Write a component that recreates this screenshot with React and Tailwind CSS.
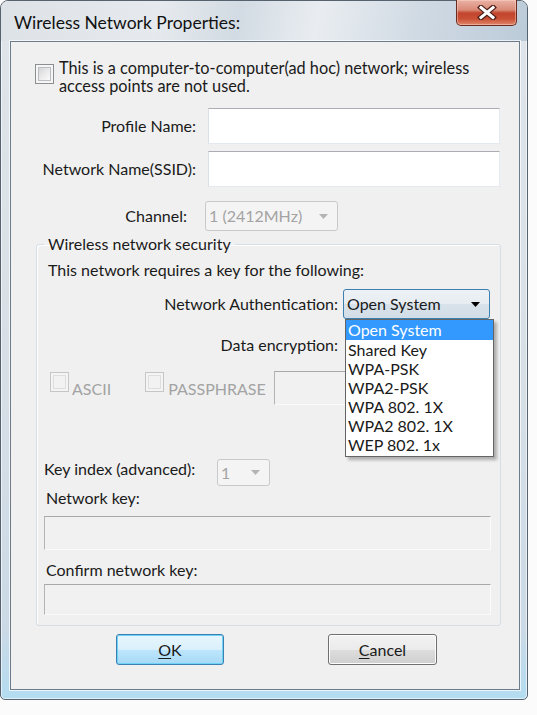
import React from "react";

function Checkbox({ disabled, className = "" }) {
  return (
    <span
      className={`block w-[19px] h-[20px] border p-[2px] ${
        disabled ? "border-[#c6c6c6] bg-[#f4f4f4]" : "border-[#8d8e8f] bg-[#f6f6f6]"
      } ${className}`}
    >
      <span
        className={`block w-full h-full border ${
          disabled
            ? "border-[#dedede] bg-[#f2f2f2]"
            : "border-[#b9bcc0] bg-[linear-gradient(135deg,#d6d6d6_0%,#ececec_55%,#fafafa_100%)]"
        }`}
      />
    </span>
  );
}

function Arrow({ color = "#000", w = 9, h = 5 }) {
  return (
    <svg width={w} height={h} viewBox="0 0 9 5">
      <polygon points="0,0 9,0 4.5,5" fill={color} />
    </svg>
  );
}

function TextInput({ className = "" }) {
  return (
    <div
      className={`bg-white border border-[#e3e9ef] border-t-[#abadb3] border-l-[#dbdfe6] ${className}`}
    />
  );
}

function DisabledInput({ className = "" }) {
  return (
    <div
      className={`bg-[#f1f1f1] border border-[#fafafa] border-t-[#a8a8a8] border-l-[#b4b4b4] ${className}`}
    />
  );
}

function DisabledSelect({ text, className = "" }) {
  return (
    <div
      className={`flex items-center justify-between rounded-[3px] border border-[#c9c9c9] bg-[#f4f4f4] pl-[3px] pr-[9px] text-[#a3a3a3] ${className}`}
    >
      <span>{text}</span>
      <Arrow color="#b4b4b4" w={9} h={5} />
    </div>
  );
}

const items = ["Open System", "Shared Key", "WPA-PSK", "WPA2-PSK", "WPA 802. 1X", "WPA2 802. 1X", "WEP 802. 1x"];

export default function App() {
  return (
    <div className="w-[537px] h-[715px] bg-[#fbfbfb] font-['Lato',sans-serif] text-[16px] leading-[18px] text-[#1a1a1a]">
      <div className="w-[528px] h-[700px] flex flex-col rounded-t-[8px] rounded-b-[5px] border border-[#56626d] bg-[linear-gradient(to_bottom,#dfe5ea_0%,#d7dfe6_55%,#cbdae6_90%,#b3dcf1_100%)] shadow-[inset_0_0_0_1px_rgba(255,255,255,0.6)]">
        <div className="h-[40px] flex items-start justify-between pl-[13px] pr-[10px] rounded-t-[7px] bg-[linear-gradient(100deg,#dde2e7_0%,#e6eaee_30%,#d2dbe3_45%,#e9edf1_60%,#cfd9e3_80%,#bccbd9_100%)]">
          <span className="mt-[12px] text-[17.5px] leading-[20px] text-[#111111]">Wireless Network Properties:</span>
          <div className="mt-[-1px] w-[61px] h-[26px] flex items-center justify-center rounded-b-[5px] border border-t-0 border-[#6b2a20] bg-[linear-gradient(to_bottom,#eab2a5_0%,#d98a77_40%,#c2452e_52%,#c94f34_75%,#e0876b_100%)] shadow-[inset_0_0_0_1px_rgba(255,220,210,0.45)]">
            <svg width="20" height="15" viewBox="0 0 20 15">
              <path d="M4 2.5 L16 12.5 M16 2.5 L4 12.5" stroke="#4a1d16" strokeWidth="5.5" strokeLinecap="square" fill="none" />
              <path d="M4 2.5 L16 12.5 M16 2.5 L4 12.5" stroke="#ffffff" strokeWidth="3" strokeLinecap="square" fill="none" />
            </svg>
          </div>
        </div>

        <div className="flex-1 ml-[9px] mr-[7px] mb-[9px] border border-[#6d7c8a] bg-[#f0f0f0] flex flex-col shadow-[0_0_0_1px_rgba(255,255,255,0.7)]">
          {/* ad hoc checkbox */}
          <div className="flex items-start pt-[17px] pl-[24px]">
            <Checkbox className="mt-[5px]" />
            <div className="ml-[5px] leading-[18px] text-[16.3px]">
              <div>This is a computer-to-computer(ad hoc) network; wireless</div>
              <div>access points are not used.</div>
            </div>
          </div>

          {/* Profile name */}
          <div className="flex items-center mt-[13px]">
            <span className="w-[185px] text-right">Profile Name:</span>
            <TextInput className="ml-[12px] w-[292px] h-[36px]" />
          </div>
          <div className="flex items-center mt-[7px]">
            <span className="w-[185px] text-right">Network Name(SSID):</span>
            <TextInput className="ml-[12px] w-[292px] h-[36px]" />
          </div>
          <div className="flex items-center mt-[14px]">
            <span className="w-[176px] text-right">Channel:</span>
            <DisabledSelect text="1 (2412MHz)" className="ml-[18px] w-[133px] h-[30px]" />
          </div>

          {/* Security group */}
          <fieldset className="mt-[4px] ml-[25px] w-[465px] rounded-[3px] border border-[#d5dfe5] pl-[7px] pb-[10px] shadow-[inset_1px_1px_0_#ffffff]">
            <legend className="px-[4px] leading-[18px]">Wireless network security</legend>
            <div className="mt-[8px] ml-[4px]">This network requires a key for the following:</div>

            <div className="flex items-center mt-[10px]">
              <span className="w-[294px] text-right">Network Authentication:</span>
              <div className="relative ml-[5px]">
                <div className="w-[147px] h-[30px] flex items-center justify-between rounded-[3px] border border-[#3c7fb1] bg-[linear-gradient(to_bottom,#eef2f6_0%,#e6ecf1_50%,#d8e2ea_51%,#d2dde7_100%)] pl-[3px] pr-[9px]">
                  <span>Open System</span>
                  <Arrow />
                </div>
                <div className="absolute left-[2px] top-[30px] z-10 w-[149px] border border-[#646464] bg-white pb-[2px] shadow-[3px_3px_3px_rgba(0,0,0,0.28)]">
                  {items.map((it, i) => (
                    <div
                      key={it}
                      className={`pl-[2px] ${i === 0 ? "h-[20px] leading-[20px] bg-[#3399ff] text-white" : "h-[19px] leading-[19px]"}`}
                    >
                      {it}
                    </div>
                  ))}
                </div>
              </div>
            </div>

            <div className="flex items-center mt-[11px] h-[30px]">
              <span className="w-[294px] text-right">Data encryption:</span>
            </div>

            <div className="flex items-start mt-[11px] h-[34px]">
              <Checkbox disabled className="ml-[6px] mt-[1px]" />
              <span className="ml-[3px] mt-[9px] text-[#a3a3a3]">ASCII</span>
              <Checkbox disabled className="ml-[34px] mt-[1px]" />
              <span className="ml-[4px] mt-[9px] text-[#a3a3a3]">PASSPHRASE</span>
              <DisabledInput className="ml-[8px] w-[214px] h-[34px]" />
            </div>

            <div className="flex items-start mt-[54px]">
              <span className="w-[173px] mt-[1px]">Key index (advanced):</span>
              <DisabledSelect text="1" className="w-[53px] h-[27px]" />
            </div>

            <div className="mt-[3px] ml-[2px]">Network key:</div>
            <DisabledInput className="mt-[9px] w-[447px] h-[34px]" />
            <div className="mt-[11px] ml-[2px]">Confirm network key:</div>
            <DisabledInput className="mt-[5px] w-[447px] h-[31px]" />
          </fieldset>

          {/* Buttons */}
          <div className="flex mt-[8px] ml-[105px]">
            <button className="w-[108px] h-[31px] rounded-[3px] border border-[#3c7fb1] bg-[linear-gradient(to_bottom,#e8f6fd_0%,#d9f0fc_50%,#bee6fd_51%,#a7d9f5_100%)] shadow-[inset_0_0_0_1px_#6fd3f7] text-[#1a1a1a]">
              <span className="underline underline-offset-2">O</span>K
            </button>
            <button className="ml-[104px] w-[109px] h-[31px] rounded-[3px] border border-[#707070] bg-[linear-gradient(to_bottom,#f2f2f2_0%,#ebebeb_50%,#dddddd_51%,#cfcfcf_100%)] shadow-[inset_0_0_0_1px_#fcfcfc] text-[#1a1a1a]">
              <span className="underline underline-offset-2">C</span>ancel
            </button>
          </div>
        </div>
      </div>
    </div>
  );
}
